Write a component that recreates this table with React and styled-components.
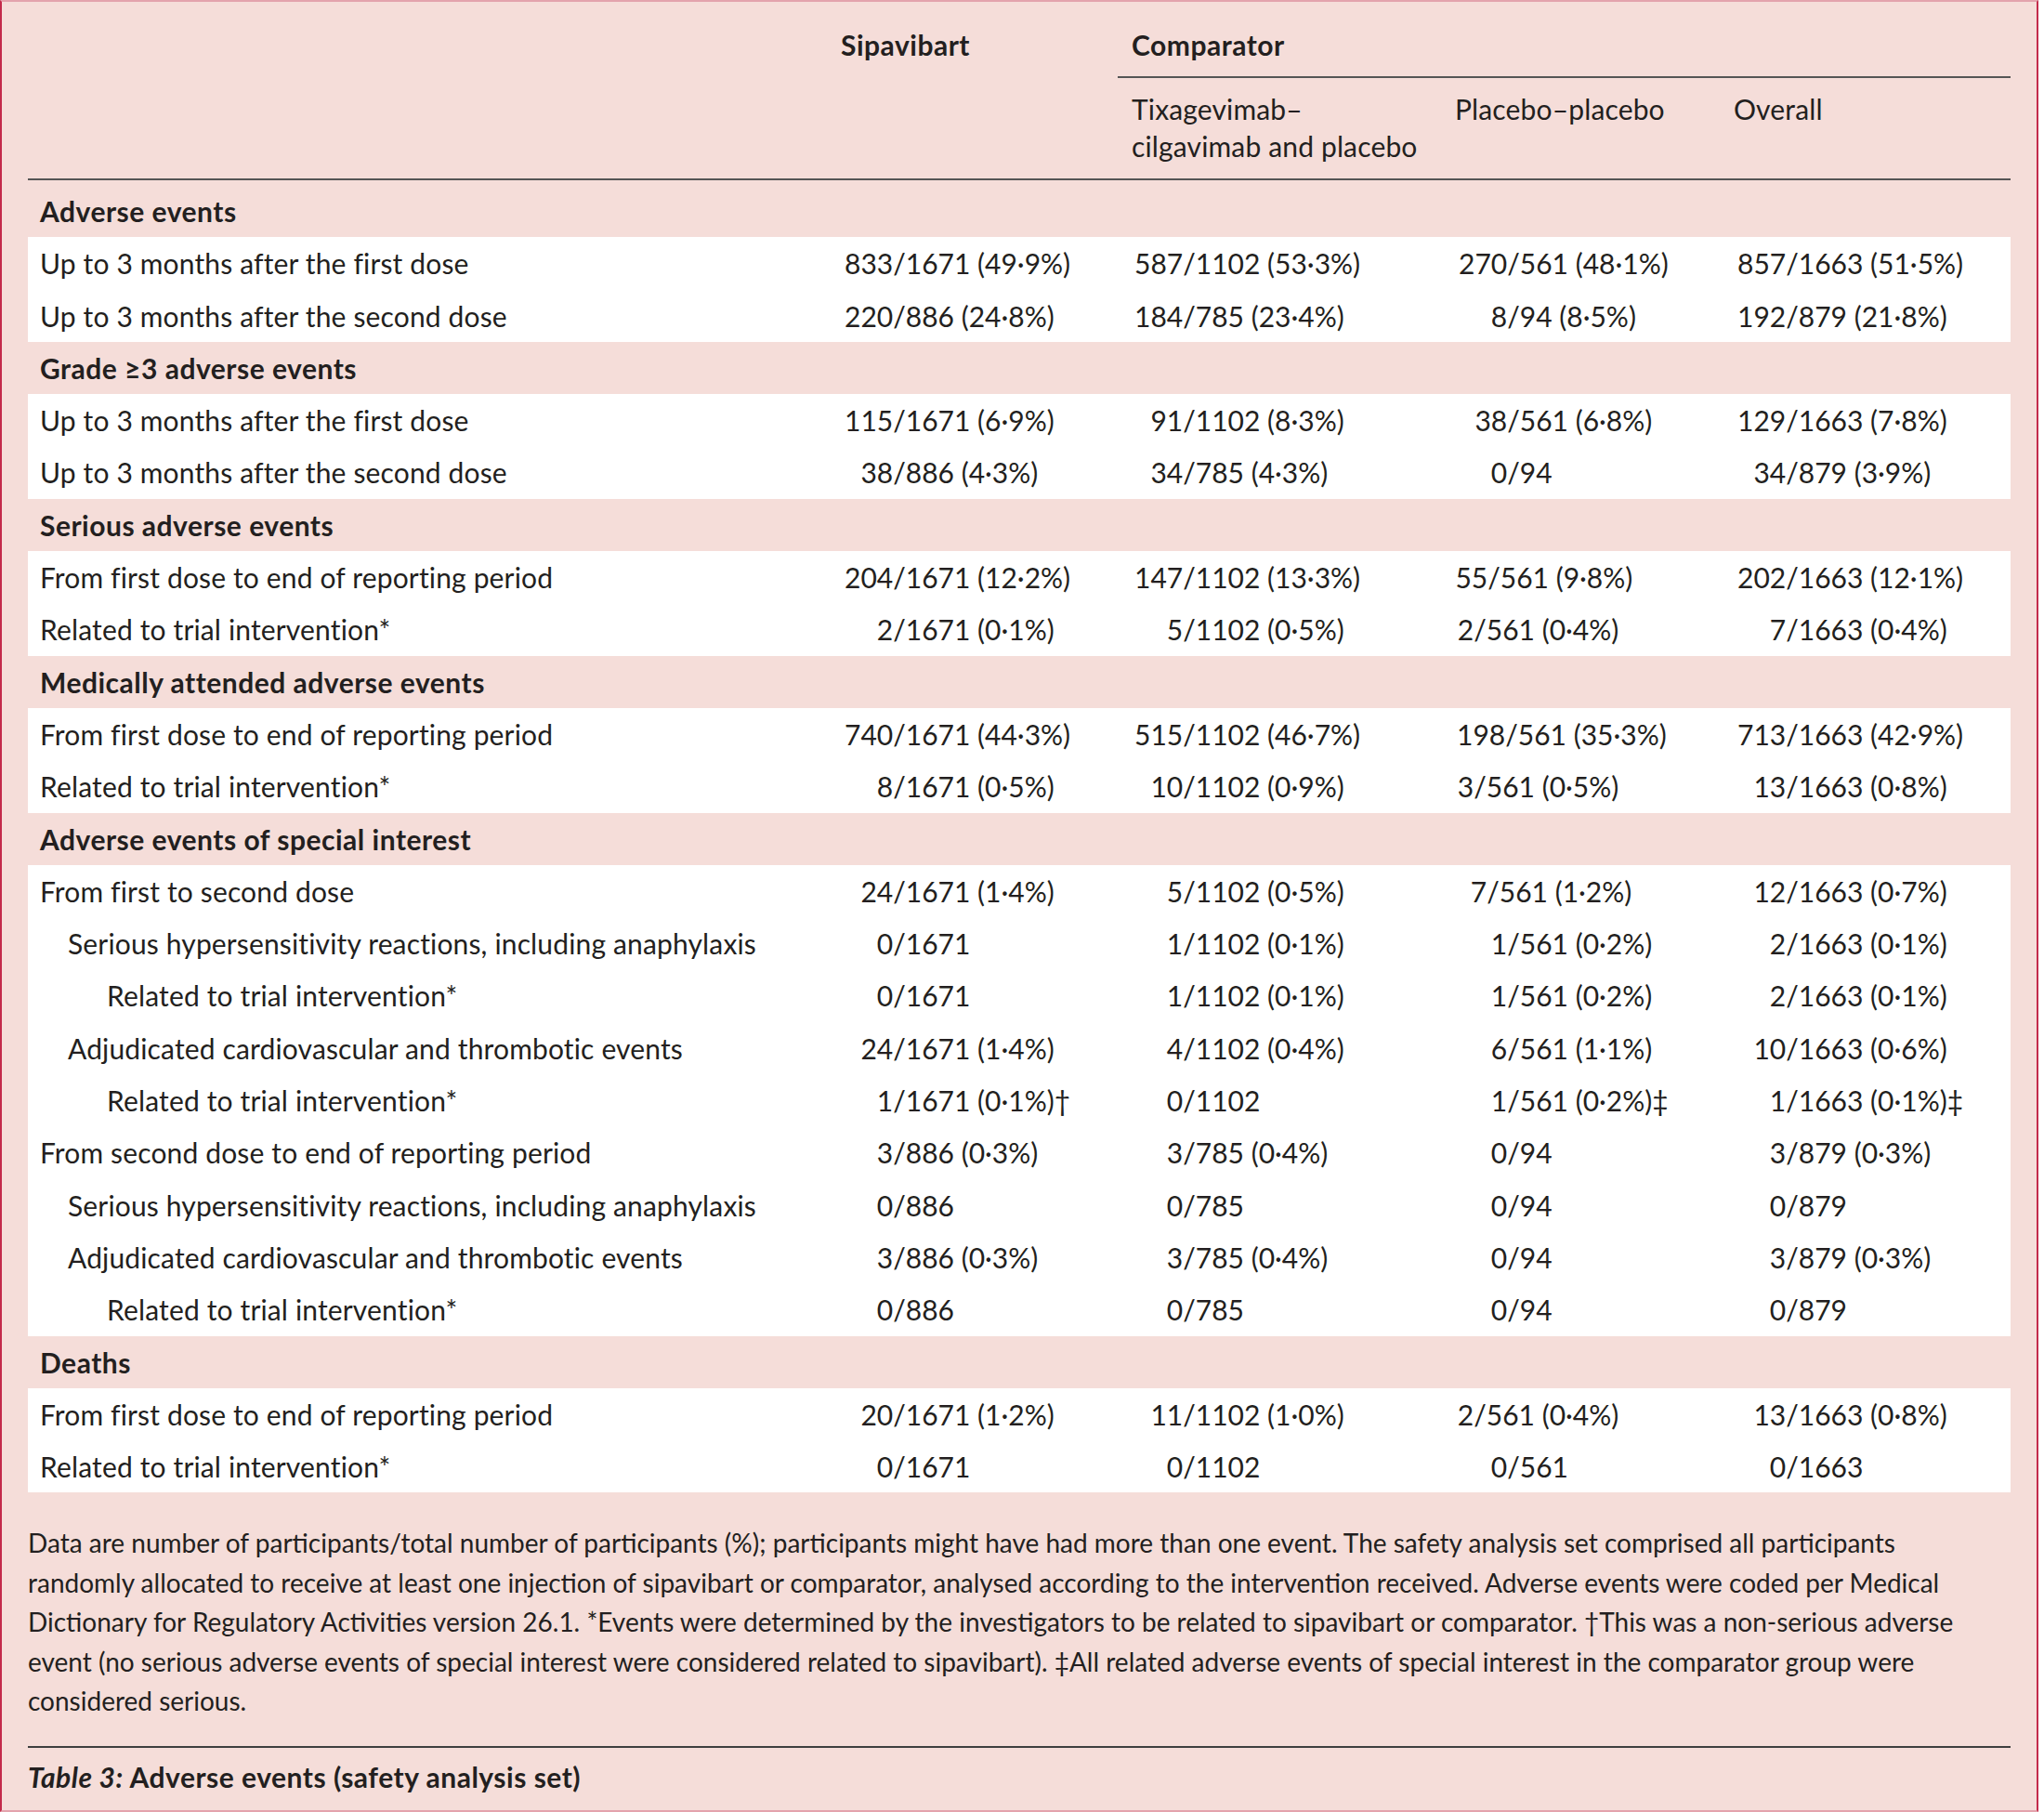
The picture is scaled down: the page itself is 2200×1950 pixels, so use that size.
import React from "react";
import styled, { createGlobalStyle } from "styled-components";

const GlobalStyle = createGlobalStyle`
  html, body {
    margin: 0;
    padding: 0;
    background: #ffffff;
  }
  body {
    font-family: Lato, "Open Sans", "Liberation Sans", sans-serif;
    color: #231f20;
  }
  strong {
    font-weight: 700;
  }
`;

const COLS = "861px 312px 349px 300px 312px";

const sections = [
  {
    title: "Adverse events",
    rows: [
      { label: "Up to 3 months after the first dose", cells: ["833/1671 (49·9%)", "587/1102 (53·3%)", "270/561 (48·1%)", "857/1663 (51·5%)"] },
      { label: "Up to 3 months after the second dose", cells: ["220/886 (24·8%)", "184/785 (23·4%)", "8/94 (8·5%)", "192/879 (21·8%)"] },
    ],
  },
  {
    title: "Grade ≥3 adverse events",
    rows: [
      { label: "Up to 3 months after the first dose", cells: ["115/1671 (6·9%)", "91/1102 (8·3%)", "38/561 (6·8%)", "129/1663 (7·8%)"] },
      { label: "Up to 3 months after the second dose", cells: ["38/886 (4·3%)", "34/785 (4·3%)", "0/94", "34/879 (3·9%)"] },
    ],
  },
  {
    title: "Serious adverse events",
    rows: [
      { label: "From first dose to end of reporting period", cells: ["204/1671 (12·2%)", "147/1102 (13·3%)", { v: "55/561 (9·8%)", shift: -21 }, "202/1663 (12·1%)"] },
      { label: "Related to trial intervention*", cells: ["2/1671 (0·1%)", "5/1102 (0·5%)", { v: "2/561 (0·4%)", shift: -36 }, "7/1663 (0·4%)"] },
    ],
  },
  {
    title: "Medically attended adverse events",
    rows: [
      { label: "From first dose to end of reporting period", cells: ["740/1671 (44·3%)", "515/1102 (46·7%)", { v: "198/561 (35·3%)", shift: -2 }, "713/1663 (42·9%)"] },
      { label: "Related to trial intervention*", cells: ["8/1671 (0·5%)", "10/1102 (0·9%)", { v: "3/561 (0·5%)", shift: -36 }, "13/1663 (0·8%)"] },
    ],
  },
  {
    title: "Adverse events of special interest",
    rows: [
      { label: "From first to second dose", cells: ["24/1671 (1·4%)", "5/1102 (0·5%)", { v: "7/561 (1·2%)", shift: -22 }, "12/1663 (0·7%)"] },
      { label: "Serious hypersensitivity reactions, including anaphylaxis", level: 1, cells: ["0/1671", "1/1102 (0·1%)", "1/561 (0·2%)", "2/1663 (0·1%)"] },
      { label: "Related to trial intervention*", level: 2, cells: ["0/1671", "1/1102 (0·1%)", "1/561 (0·2%)", "2/1663 (0·1%)"] },
      { label: "Adjudicated cardiovascular and thrombotic events", level: 1, cells: ["24/1671 (1·4%)", "4/1102 (0·4%)", "6/561 (1·1%)", "10/1663 (0·6%)"] },
      { label: "Related to trial intervention*", level: 2, cells: ["1/1671 (0·1%)†", "0/1102", "1/561 (0·2%)‡", "1/1663 (0·1%)‡"] },
      { label: "From second dose to end of reporting period", cells: ["3/886 (0·3%)", "3/785 (0·4%)", "0/94", "3/879 (0·3%)"] },
      { label: "Serious hypersensitivity reactions, including anaphylaxis", level: 1, cells: ["0/886", "0/785", "0/94", "0/879"] },
      { label: "Adjudicated cardiovascular and thrombotic events", level: 1, cells: ["3/886 (0·3%)", "3/785 (0·4%)", "0/94", "3/879 (0·3%)"] },
      { label: "Related to trial intervention*", level: 2, cells: ["0/886", "0/785", "0/94", "0/879"] },
    ],
  },
  {
    title: "Deaths",
    rows: [
      { label: "From first dose to end of reporting period", cells: ["20/1671 (1·2%)", "11/1102 (1·0%)", { v: "2/561 (0·4%)", shift: -36 }, "13/1663 (0·8%)"] },
      { label: "Related to trial intervention*", cells: ["0/1671", "0/1102", "0/561", "0/1663"] },
    ],
  },
];

const footnoteLines = [
  "Data are number of participants/total number of participants (%); participants might have had more than one event. The safety analysis set comprised all participants",
  "randomly allocated to receive at least one injection of sipavibart or comparator, analysed according to the intervention received. Adverse events were coded per Medical",
  "Dictionary for Regulatory Activities version 26.1. *Events were determined by the investigators to be related to sipavibart or comparator. †This was a non-serious adverse",
  "event (no serious adverse events of special interest were considered related to sipavibart). ‡All related adverse events of special interest in the comparator group were",
  "considered serious.",
];

function Value({ cell }) {
  const text = typeof cell === "string" ? cell : cell.v;
  const shift = typeof cell === "string" ? 0 : cell.shift;
  const cut = text.indexOf("/");
  return (
    <ValueCell $shift={shift}>
      <Numerator>{text.slice(0, cut)}</Numerator>
      {text.slice(cut)}
    </ValueCell>
  );
}

export default function App() {
  return (
    <>
      <GlobalStyle />
      <Frame>
        <Head>
          <HeadTop />
          <HeadTop>
            <strong>Sipavibart</strong>
          </HeadTop>
          <GroupTitle>Comparator</GroupTitle>
          <HeadSub />
          <HeadSub />
          <HeadSub $first>
            Tixagevimab–
            <br />
            cilgavimab and placebo
          </HeadSub>
          <HeadSub>Placebo–placebo</HeadSub>
          <HeadSub>Overall</HeadSub>
        </Head>

        <Body>
          {sections.map((section) => (
            <section key={section.title}>
              <SectionTitle>{section.title}</SectionTitle>
              <RowGroup>
                {section.rows.map((row, i) => (
                  <Row key={i}>
                    <Label $level={row.level || 0}>{row.label}</Label>
                    {row.cells.map((cell, j) => (
                      <Value key={j} cell={cell} />
                    ))}
                  </Row>
                ))}
              </RowGroup>
            </section>
          ))}
        </Body>

        <Footnote>
          {footnoteLines.map((line, i) => (
            <FootLine key={i}>{line}</FootLine>
          ))}
        </Footnote>

        <Caption>
          <em>Table 3:</em> Adverse events (safety analysis set)
        </Caption>
      </Frame>
    </>
  );
}

const Frame = styled.div`
  box-sizing: border-box;
  width: 2194px;
  height: 1950px;
  padding: 0 28px;
  background: #f5ddd9;
  border-left: 2px solid #c32a4b;
  border-right: 2px solid #c32a4b;
  border-top: 2px solid #e3a3ad;
  border-bottom: 2px solid #e3a3ad;
  font-size: 30px;
  letter-spacing: 0.15px;
`;

const Head = styled.div`
  display: grid;
  grid-template-columns: ${COLS};
  border-bottom: 2px solid #555555;
`;

const HeadTop = styled.div`
  padding: 26px 14px 14px;
  line-height: 40px;
  font-weight: 700;
  letter-spacing: 0.5px;
`;

const GroupTitle = styled.div`
  grid-column: 3 / 6;
  padding: 26px 15px 14px;
  line-height: 40px;
  font-weight: 700;
  letter-spacing: 0.5px;
  border-bottom: 2px solid #555555;
`;

const HeadSub = styled.div`
  padding: 13px 14px 15px ${(p) => (p.$first ? 15 : 14)}px;
  line-height: 40px;
  min-height: 80px;
`;

const Body = styled.div`
  padding-top: 5px;
`;

const SectionTitle = styled.div`
  height: 56.3px;
  line-height: 56.3px;
  padding-left: 13px;
  font-weight: 700;
  letter-spacing: 0.5px;
`;

const RowGroup = styled.div`
  background: #ffffff;
`;

const Row = styled.div`
  display: grid;
  grid-template-columns: ${COLS};
  height: 56.3px;
  line-height: 56.3px;
  white-space: nowrap;
`;

const Label = styled.div`
  padding-left: ${(p) => [13, 43, 85][p.$level]}px;
`;

const ValueCell = styled.div`
  padding-left: 18px;
  margin-left: ${(p) => p.$shift}px;
  letter-spacing: 0;
`;

const Numerator = styled.span`
  display: inline-block;
  width: 3ch;
  text-align: right;
`;

const Footnote = styled.div`
  margin-top: 33px;
  font-size: 28px;
  line-height: 42.5px;
  letter-spacing: 0;
`;

const FootLine = styled.div`
  white-space: nowrap;
`;

const Caption = styled.div`
  margin-top: 27px;
  padding-top: 11px;
  border-top: 2px solid #3f3f3f;
  line-height: 40px;
  font-weight: 700;
  letter-spacing: 0.5px;

  em {
    font-style: italic;
  }
`;
